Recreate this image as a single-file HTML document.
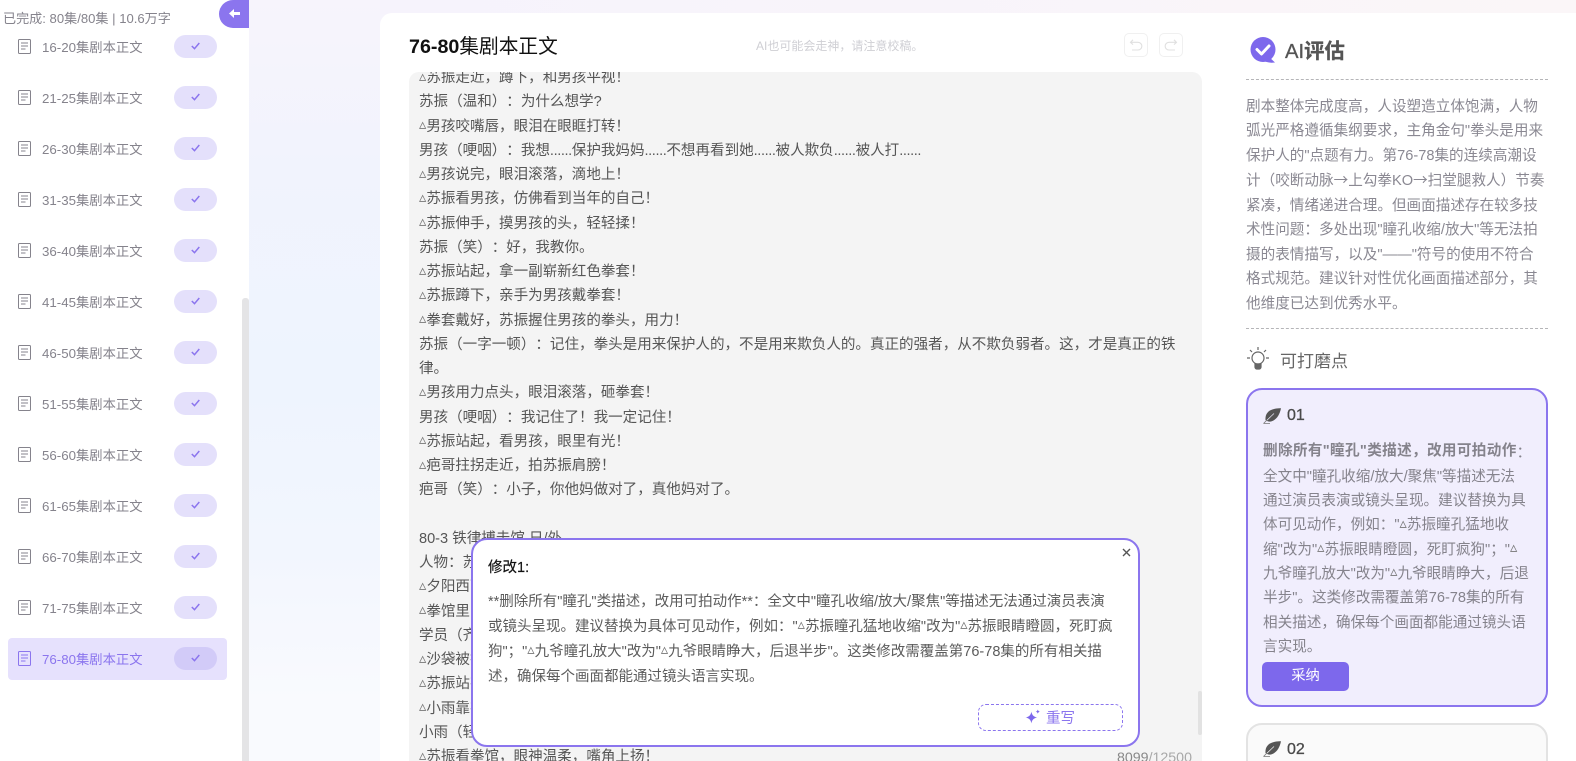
<!DOCTYPE html>
<html lang="zh-CN"><head><meta charset="utf-8"><title>76-80集剧本正文</title>
<style>
*{box-sizing:border-box;margin:0;padding:0}
html,body{width:1576px;height:761px;overflow:hidden;background:#fff}
body{position:relative;font-family:"Liberation Sans","Noto Sans CJK SC",sans-serif;color:#555;text-spacing-trim:space-all}
.abs,.row,.row *{position:absolute}
.bg{position:absolute;left:249px;top:0;width:1327px;height:761px;background:linear-gradient(180deg,#f7f4fc 0,#f1f3fd 22%,#eef4fe 50%,#f2f6fe 72%,#f9fafe 92%)}
.topband{position:absolute;left:380px;top:0;width:1196px;height:14px;background:linear-gradient(90deg,#f6f3fc,#fbf6f8)}
.side{position:absolute;left:0;top:0;width:249px;height:761px;background:#fff}
.row{left:0;width:242px;height:51px}
.row .ic{left:18px;top:16px}
.row .t{left:42px;top:13px;font-size:13.3px;line-height:24px;color:#85838c;white-space:nowrap}
.row .p{left:174px;top:12px;width:43px;height:23px;border-radius:12px;background:#e4e0fb}
.row .p svg{left:17px;top:7px}
.row.on .bgx{left:8px;top:3px;width:219px;height:42px;background:#e6e1fd;border-radius:4px}
.row.on .t{color:#8b75ee}
.row.on .p{background:#d2cbf8}
.card{position:absolute;left:380px;top:13px;width:1196px;height:748px;background:#fff;border-radius:12px 0 0 0}
.ta{position:absolute;left:409px;top:72px;width:793px;height:689px;background:#f4f4f4;border-radius:10px 10px 0 0;overflow:hidden}
.lines{position:absolute;left:10px;top:-6px;font-size:14.55px;line-height:24.25px;color:#565656;white-space:nowrap}
.lines u{text-decoration:none;letter-spacing:-.4px}
i{font-style:normal;position:relative;top:-1.5px;color:#777}
.pop{position:absolute;left:471px;top:538px;width:669px;height:209px;background:#fff;border:2px solid #8b75ee;border-radius:16px}
.pl{position:absolute;left:15px;top:49.500px;font-size:14.5px;line-height:25px;color:#5c5c5c;white-space:nowrap}
.rw{position:absolute;left:505px;top:164px;width:145px;height:27px;border:1px dashed #8b75ee;border-radius:8px}
.para{position:absolute;left:1246px;top:94.750px;font-size:14.6px;line-height:24.5px;color:#8a8892;white-space:nowrap}
.para span{font-family:"Noto Sans CJK SC",sans-serif}
.dash{position:absolute;left:1246px;width:302px;border-top:1px dashed #b5b5b8}
.c1{position:absolute;left:1246px;top:388px;width:302px;height:319px;background:#f1eefd;border:2px solid #8b75ee;border-radius:16px}
.c2{position:absolute;left:1246px;top:723px;width:302px;height:60px;background:#fafafa;border:2px solid #e3e3e3;border-radius:16px}
.ct{position:absolute;left:15px;top:50.500px;font-size:14.6px;line-height:24.3px;color:#85838c;white-space:nowrap}
.ct b{font-weight:700;letter-spacing:.35px;position:relative;top:-1.5px}
.num{position:absolute;left:39px;font-size:16px;line-height:20px;color:#4a4a4a;-webkit-text-stroke:.3px #4a4a4a}
.leaf{position:absolute;left:15px}
.btn{position:absolute;width:24px;height:24px;top:33px;border:1px solid #f0f0f0;border-radius:5px}
</style></head><body>
<div class="bg"></div><div class="topband"></div>
<div class="side">
<div class="abs" style="left:3px;top:10px;font-size:13.1px;line-height:18px;color:#85838c;white-space:nowrap">已完成: 80集/80集 | 10.6万字</div>
<div class="abs" style="left:219px;top:0;width:30px;height:28px;background:#8b75ee;border-radius:14px 0 0 14px"></div>
<svg class="abs" style="left:228px;top:7px" width="13" height="13" viewBox="0 0 13 13"><path d="M1 6.500 6 2v3h6v3H6v3z" fill="#fff"/></svg>
<div class="abs" style="left:242px;top:298px;width:7px;height:463px;background:#e4e4e6;border-radius:3px 3px 0 0"></div>

<div class="row" style="top:23px"><svg class="ic" width="13" height="15" viewBox="0 0 13 15" fill="none" stroke="#85838c"><rect x=".5" y=".5" width="12" height="14" rx="1"/><path d="M3 4h7M3 7h7M3 10h4.500"/></svg><span class="t">16-20集剧本正文</span><span class="p"><svg width="9" height="8" viewBox="0 0 9 8" fill="none" stroke="#8b75ee" stroke-width="1.500"><path d="M.8 4 3.500 6.700 8.300 1"/></svg></span></div>
<div class="row" style="top:74px"><svg class="ic" width="13" height="15" viewBox="0 0 13 15" fill="none" stroke="#85838c"><rect x=".5" y=".5" width="12" height="14" rx="1"/><path d="M3 4h7M3 7h7M3 10h4.500"/></svg><span class="t">21-25集剧本正文</span><span class="p"><svg width="9" height="8" viewBox="0 0 9 8" fill="none" stroke="#8b75ee" stroke-width="1.500"><path d="M.8 4 3.500 6.700 8.300 1"/></svg></span></div>
<div class="row" style="top:125px"><svg class="ic" width="13" height="15" viewBox="0 0 13 15" fill="none" stroke="#85838c"><rect x=".5" y=".5" width="12" height="14" rx="1"/><path d="M3 4h7M3 7h7M3 10h4.500"/></svg><span class="t">26-30集剧本正文</span><span class="p"><svg width="9" height="8" viewBox="0 0 9 8" fill="none" stroke="#8b75ee" stroke-width="1.500"><path d="M.8 4 3.500 6.700 8.300 1"/></svg></span></div>
<div class="row" style="top:176px"><svg class="ic" width="13" height="15" viewBox="0 0 13 15" fill="none" stroke="#85838c"><rect x=".5" y=".5" width="12" height="14" rx="1"/><path d="M3 4h7M3 7h7M3 10h4.500"/></svg><span class="t">31-35集剧本正文</span><span class="p"><svg width="9" height="8" viewBox="0 0 9 8" fill="none" stroke="#8b75ee" stroke-width="1.500"><path d="M.8 4 3.500 6.700 8.300 1"/></svg></span></div>
<div class="row" style="top:227px"><svg class="ic" width="13" height="15" viewBox="0 0 13 15" fill="none" stroke="#85838c"><rect x=".5" y=".5" width="12" height="14" rx="1"/><path d="M3 4h7M3 7h7M3 10h4.500"/></svg><span class="t">36-40集剧本正文</span><span class="p"><svg width="9" height="8" viewBox="0 0 9 8" fill="none" stroke="#8b75ee" stroke-width="1.500"><path d="M.8 4 3.500 6.700 8.300 1"/></svg></span></div>
<div class="row" style="top:278px"><svg class="ic" width="13" height="15" viewBox="0 0 13 15" fill="none" stroke="#85838c"><rect x=".5" y=".5" width="12" height="14" rx="1"/><path d="M3 4h7M3 7h7M3 10h4.500"/></svg><span class="t">41-45集剧本正文</span><span class="p"><svg width="9" height="8" viewBox="0 0 9 8" fill="none" stroke="#8b75ee" stroke-width="1.500"><path d="M.8 4 3.500 6.700 8.300 1"/></svg></span></div>
<div class="row" style="top:329px"><svg class="ic" width="13" height="15" viewBox="0 0 13 15" fill="none" stroke="#85838c"><rect x=".5" y=".5" width="12" height="14" rx="1"/><path d="M3 4h7M3 7h7M3 10h4.500"/></svg><span class="t">46-50集剧本正文</span><span class="p"><svg width="9" height="8" viewBox="0 0 9 8" fill="none" stroke="#8b75ee" stroke-width="1.500"><path d="M.8 4 3.500 6.700 8.300 1"/></svg></span></div>
<div class="row" style="top:380px"><svg class="ic" width="13" height="15" viewBox="0 0 13 15" fill="none" stroke="#85838c"><rect x=".5" y=".5" width="12" height="14" rx="1"/><path d="M3 4h7M3 7h7M3 10h4.500"/></svg><span class="t">51-55集剧本正文</span><span class="p"><svg width="9" height="8" viewBox="0 0 9 8" fill="none" stroke="#8b75ee" stroke-width="1.500"><path d="M.8 4 3.500 6.700 8.300 1"/></svg></span></div>
<div class="row" style="top:431px"><svg class="ic" width="13" height="15" viewBox="0 0 13 15" fill="none" stroke="#85838c"><rect x=".5" y=".5" width="12" height="14" rx="1"/><path d="M3 4h7M3 7h7M3 10h4.500"/></svg><span class="t">56-60集剧本正文</span><span class="p"><svg width="9" height="8" viewBox="0 0 9 8" fill="none" stroke="#8b75ee" stroke-width="1.500"><path d="M.8 4 3.500 6.700 8.300 1"/></svg></span></div>
<div class="row" style="top:482px"><svg class="ic" width="13" height="15" viewBox="0 0 13 15" fill="none" stroke="#85838c"><rect x=".5" y=".5" width="12" height="14" rx="1"/><path d="M3 4h7M3 7h7M3 10h4.500"/></svg><span class="t">61-65集剧本正文</span><span class="p"><svg width="9" height="8" viewBox="0 0 9 8" fill="none" stroke="#8b75ee" stroke-width="1.500"><path d="M.8 4 3.500 6.700 8.300 1"/></svg></span></div>
<div class="row" style="top:533px"><svg class="ic" width="13" height="15" viewBox="0 0 13 15" fill="none" stroke="#85838c"><rect x=".5" y=".5" width="12" height="14" rx="1"/><path d="M3 4h7M3 7h7M3 10h4.500"/></svg><span class="t">66-70集剧本正文</span><span class="p"><svg width="9" height="8" viewBox="0 0 9 8" fill="none" stroke="#8b75ee" stroke-width="1.500"><path d="M.8 4 3.500 6.700 8.300 1"/></svg></span></div>
<div class="row" style="top:584px"><svg class="ic" width="13" height="15" viewBox="0 0 13 15" fill="none" stroke="#85838c"><rect x=".5" y=".5" width="12" height="14" rx="1"/><path d="M3 4h7M3 7h7M3 10h4.500"/></svg><span class="t">71-75集剧本正文</span><span class="p"><svg width="9" height="8" viewBox="0 0 9 8" fill="none" stroke="#8b75ee" stroke-width="1.500"><path d="M.8 4 3.500 6.700 8.300 1"/></svg></span></div>
<div class="row on" style="top:635px"><span class="bgx"></span><svg class="ic" width="13" height="15" viewBox="0 0 13 15" fill="none" stroke="#8b75ee"><rect x=".5" y=".5" width="12" height="14" rx="1"/><path d="M3 4h7M3 7h7M3 10h4.500"/></svg><span class="t">76-80集剧本正文</span><span class="p"><svg width="9" height="8" viewBox="0 0 9 8" fill="none" stroke="#8b75ee" stroke-width="1.500"><path d="M.8 4 3.500 6.700 8.300 1"/></svg></span></div>
</div>

<div class="card"></div>
<div class="abs" style="left:409px;top:33px;font-size:19.7px;line-height:28px;color:#111;white-space:nowrap"><b>76-80</b>集剧本正文</div>
<div class="abs" style="left:756px;top:38px;font-size:12px;line-height:16px;color:#cfcfd4;white-space:nowrap">AI也可能会走神，请注意校稿。</div>
<div class="btn" style="left:1124px"><svg class="abs" style="left:4px;top:5px" width="14" height="13" viewBox="0 0 14 13" fill="none" stroke="#e0e0e0" stroke-width="1.100"><path d="M4 .8 1.500 3.300 4 5.600M1.500 3.300h7.500a3.800 3.800 0 0 1 0 7.700H3"/></svg></div>
<div class="btn" style="left:1159px"><svg class="abs" style="left:4px;top:5px" width="14" height="13" viewBox="0 0 14 13" fill="none" stroke="#e0e0e0" stroke-width="1.100"><path d="M10 .8 12.500 3.300 10 5.600M12.500 3.300H5a3.800 3.800 0 0 0 0 7.700h6"/></svg></div>

<div class="ta"><div class="lines"><i>▵</i>苏振走近，蹲下，和男孩平视！<br>苏振（温和）：为什么想学?<br><i>▵</i>男孩咬嘴唇，眼泪在眼眶打转！<br>男孩（哽咽）：我想<u>......</u>保护我妈妈<u>......</u>不想再看到她<u>......</u>被人欺负<u>......</u>被人打<u>......</u><br><i>▵</i>男孩说完，眼泪滚落，滴地上！<br><i>▵</i>苏振看男孩，仿佛看到当年的自己！<br><i>▵</i>苏振伸手，摸男孩的头，轻轻揉！<br>苏振（笑）：好，我教你。<br><i>▵</i>苏振站起，拿一副崭新红色拳套！<br><i>▵</i>苏振蹲下，亲手为男孩戴拳套！<br><i>▵</i>拳套戴好，苏振握住男孩的拳头，用力！<br>苏振（一字一顿）：记住，拳头是用来保护人的，不是用来欺负人的。真正的强者，从不欺负弱者。这，才是真正的铁<br>律。<br><i>▵</i>男孩用力点头，眼泪滚落，砸拳套！<br>男孩（哽咽）：我记住了！我一定记住！<br><i>▵</i>苏振站起，看男孩，眼里有光！<br><i>▵</i>疤哥拄拐走近，拍苏振肩膀！<br>疤哥（笑）：小子，你他妈做对了，真他妈对了。<br><br>80-3 铁律搏击馆 日/外<br>人物：苏振、小雨、学员<br><i>▵</i>夕阳西下，余晖洒落！<br><i>▵</i>拳馆里，学员们在训练！<br>学员（齐声）：嘿！哈！<br><i>▵</i>沙袋被打得晃动！<br><i>▵</i>苏振站在门口看着！<br><i>▵</i>小雨靠在他肩上！<br>小雨（轻声）：真好。<br><i>▵</i>苏振看拳馆，眼神温柔，嘴角上扬！</div>
<div class="abs" style="left:789px;top:619px;width:4px;height:44px;background:#e2e2e2;border-radius:2px"></div></div>
<div class="abs" style="left:1117px;top:750px;font-size:14.2px;line-height:17px;color:#888;white-space:nowrap">8099<span style="color:#a8a8a8">/12500</span></div>

<div class="pop">
<div class="abs" style="left:15px;top:18px;font-size:14.5px;line-height:20px;color:#111;-webkit-text-stroke:.2px #111">修改1:</div>
<svg class="abs" style="left:649px;top:8px" width="9" height="9" viewBox="0 0 9 9" fill="none" stroke="#555" stroke-width="1.400"><path d="M1 1l7 7M8 1 1 8"/></svg>
<div class="pl">**删除所有"瞳孔"类描述，改用可拍动作**：全文中"瞳孔收缩/放大/聚焦"等描述无法通过演员表演<br>或镜头呈现。建议替换为具体可见动作，例如："<i>▵</i>苏振瞳孔猛地收缩"改为"<i>▵</i>苏振眼睛瞪圆，死盯疯<br>狗"；"<i>▵</i>九爷瞳孔放大"改为"<i>▵</i>九爷眼睛睁大，后退半步"。这类修改需覆盖第76-78集的所有相关描<br>述，确保每个画面都能通过镜头语言实现。</div>
<div class="rw"><svg class="abs" style="left:46px;top:4px" width="16" height="16" viewBox="0 0 15 15" fill="#7d68ec"><path d="M6 2.500c.6 3.300 2.100 4.900 5.500 5.500-3.400.6-4.900 2.200-5.500 5.500C5.400 10.200 3.900 8.600.5 8 3.900 7.400 5.400 5.800 6 2.500z"/><path d="M12 .5c.2 1.100.9 1.800 2 2-1.100.2-1.800.9-2 2-.2-1.100-.9-1.800-2-2 1.100-.2 1.800-.9 2-2z"/></svg><span class="abs" style="left:67px;top:4px;font-size:14.5px;line-height:20px;color:#8b75ee">重写</span></div>
</div>

<svg class="abs" style="left:1250px;top:37px" width="26" height="26" viewBox="0 0 26 26"><circle cx="13" cy="12.500" r="12.500" fill="#7d68ec"/><path d="M19 20 L25 25.500 C21 26 17 25.500 14 24z" fill="#7d68ec"/><path d="M7 12.500 11.500 17 19 9" fill="none" stroke="#fff" stroke-width="3" stroke-linecap="round" stroke-linejoin="round"/></svg>
<div class="abs" style="left:1285px;top:38px;font-size:20.3px;line-height:28px;color:#555;white-space:nowrap;-webkit-text-stroke:.3px #555">AI<b>评估</b></div>
<div class="dash" style="top:79px"></div>
<div class="para">剧本整体完成度高，人设塑造立体饱满，人物<br>弧光严格遵循集纲要求，主角金句"拳头是用来<br>保护人的"点题有力。第76-78集的连续高潮设<br>计（咬断动脉<span>→</span>上勾拳KO<span>→</span>扫堂腿救人）节奏<br>紧凑，情绪递进合理。但画面描述存在较多技<br>术性问题：多处出现"瞳孔收缩/放大"等无法拍<br>摄的表情描写，以及"——"符号的使用不符合<br>格式规范。建议针对性优化画面描述部分，其<br>他维度已达到优秀水平。</div>
<div class="dash" style="top:328px"></div>
<svg class="abs" style="left:1247px;top:346px" width="22" height="26" viewBox="0 0 22 26" fill="none" stroke="#666" stroke-width="1.200"><circle cx="11" cy="12" r="6"/><path d="M11 1v3M3 4l2 2M19 4l-2 2M0 12h3M19 12h3"/><path d="M8 18h6v3a2 2 0 0 1-2 2h-2a2 2 0 0 1-2-2z" fill="#666"/></svg>
<div class="abs" style="left:1280px;top:350px;font-size:17px;line-height:24px;color:#666;white-space:nowrap">可打磨点</div>

<div class="c1">
<svg class="leaf" style="top:18px" width="18" height="16" viewBox="0 0 18 16"><path d="M18 .2C9 .2 1.800 3 2.500 12 4.500 14 8 14 10.500 12.500 14.500 10 16.800 6 18 .2z" fill="#555"/><path d="M.5 15.500 11 5.500" stroke="#f1eefd" stroke-width=".7" fill="none"/><path d="M.5 15.500 4 12M.5 15.500H7" stroke="#777" stroke-width=".8" fill="none"/></svg>
<div class="num" style="top:16px">01</div>
<div class="ct"><b>删除所有"瞳孔"类描述，改用可拍动作</b>：<br>全文中"瞳孔收缩/放大/聚焦"等描述无法<br>通过演员表演或镜头呈现。建议替换为具<br>体可见动作，例如："<i>▵</i>苏振瞳孔猛地收<br>缩"改为"<i>▵</i>苏振眼睛瞪圆，死盯疯狗"；"<i>▵</i><br>九爷瞳孔放大"改为"<i>▵</i>九爷眼睛睁大，后退<br>半步"。这类修改需覆盖第76-78集的所有<br>相关描述，确保每个画面都能通过镜头语<br>言实现。</div>
<div class="abs" style="left:14px;top:272px;width:87px;height:29px;background:#7d68ec;border-radius:5px;color:#fff;font-size:14.3px;line-height:29px;text-align:center">采纳</div>
</div>
<div class="c2">
<svg class="leaf" style="top:16px" width="18" height="16" viewBox="0 0 18 16"><path d="M18 .2C9 .2 1.800 3 2.500 12 4.500 14 8 14 10.500 12.500 14.500 10 16.800 6 18 .2z" fill="#555"/><path d="M.5 15.500 11 5.500" stroke="#fafafa" stroke-width=".7" fill="none"/><path d="M.5 15.500 4 12M.5 15.500H7" stroke="#777" stroke-width=".8" fill="none"/></svg>
<div class="num" style="top:15px">02</div>
</div>
</body></html>
